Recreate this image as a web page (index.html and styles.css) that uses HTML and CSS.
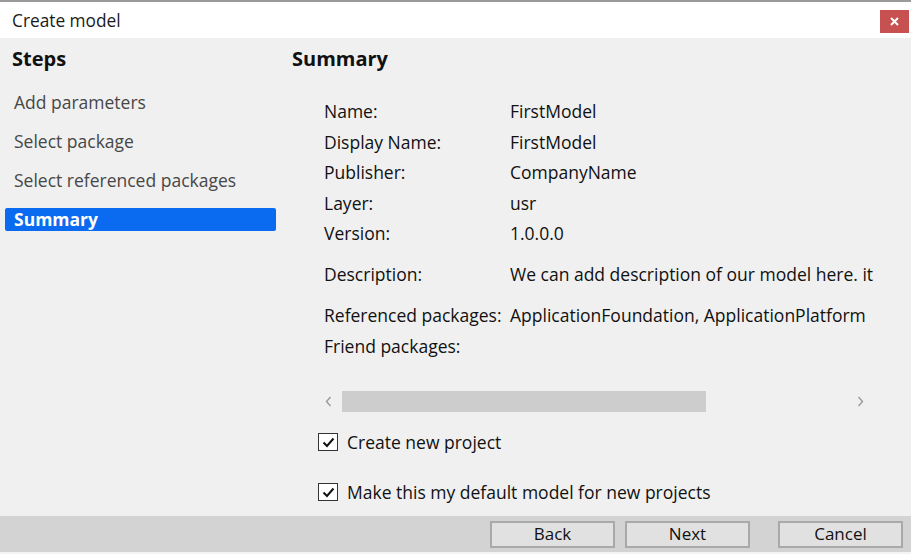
FILE: index.html
```html
<!DOCTYPE html>
<html>
<head>
<meta charset="utf-8">
<link rel="stylesheet" href="styles.css">
</head>
<body>
<div class="window">
  <div class="titlebar">
    <span class="title">Create model</span>
    <button class="close" aria-label="Close">
      <svg width="9" height="9" viewBox="0 0 9 9"><path d="M1 1 L8 8 M8 1 L1 8" stroke="#fff" stroke-width="2"/></svg>
    </button>
  </div>
  <div class="main">
    <div class="sidebar">
      <div class="heading">Steps</div>
      <ul class="steps">
        <li>Add parameters</li>
        <li>Select package</li>
        <li>Select referenced packages</li>
        <li class="active">Summary</li>
      </ul>
    </div>
    <div class="content">
      <div class="heading">Summary</div>
      <div class="summary">
        <div class="row"><span class="label">Name:</span><span class="value">FirstModel</span></div>
        <div class="row"><span class="label">Display Name:</span><span class="value">FirstModel</span></div>
        <div class="row"><span class="label">Publisher:</span><span class="value">CompanyName</span></div>
        <div class="row"><span class="label">Layer:</span><span class="value">usr</span></div>
        <div class="row"><span class="label">Version:</span><span class="value">1.0.0.0</span></div>
        <div class="row desc"><span class="label">Description:</span><span class="value">We can add description of our model here. it</span></div>
        <div class="row refs"><span class="label">Referenced packages:</span><span class="value">ApplicationFoundation, ApplicationPlatform</span></div>
        <div class="row"><span class="label">Friend packages:</span><span class="value"></span></div>
      </div>
      <div class="hscroll">
        <svg class="arrow" width="7" height="11" viewBox="0 0 7 11"><path d="M5.5 1 L1.5 5.5 L5.5 10" fill="none" stroke="#9a9a9a" stroke-width="1.4"/></svg>
        <div class="track"><div class="thumb"></div></div>
        <svg class="arrow" width="7" height="11" viewBox="0 0 7 11"><path d="M1.5 1 L5.5 5.5 L1.5 10" fill="none" stroke="#9a9a9a" stroke-width="1.4"/></svg>
      </div>
      <label class="check first"><span class="box"><svg width="13" height="11" viewBox="0 0 13 11"><path d="M1.5 5.5 L5 9 L11.5 1.5" fill="none" stroke="#111" stroke-width="2"/></svg></span>Create new project</label>
      <label class="check second"><span class="box"><svg width="13" height="11" viewBox="0 0 13 11"><path d="M1.5 5.5 L5 9 L11.5 1.5" fill="none" stroke="#111" stroke-width="2"/></svg></span>Make this my default model for new projects</label>
    </div>
  </div>
  <div class="footer">
    <button class="btn">Back</button>
    <button class="btn">Next</button>
    <button class="btn cancel">Cancel</button>
  </div>
  <div class="bottomline"></div>
</div>
</body>
</html>
```

FILE: styles.css
```css
html, body {
  margin: 0;
  padding: 0;
  background: #ffffff;
}
body {
  font-family: "Open Sans", "Noto Sans", sans-serif;
  font-size: 17.5px;
  font-weight: 500;
  color: #111111;
}
.window {
  width: 911px;
  height: 554px;
  display: flex;
  flex-direction: column;
  overflow: hidden;
}
.titlebar {
  height: 36px;
  border-top: 2px solid #9a9a9a;
  background: #ffffff;
  display: flex;
  align-items: center;
  justify-content: space-between;
  padding: 0 2px 0 12px;
}
.title {
  font-size: 17.3px;
  color: #1a1a1a;
}
.close {
  width: 29px;
  height: 23px;
  margin-top: 8px;
  align-self: flex-start;
  background: #c75050;
  border: none;
  padding: 0;
  display: flex;
  align-items: center;
  justify-content: center;
}
.main {
  flex: 1;
  display: flex;
  background: #f0f0f0;
}
.sidebar {
  width: 280px;
  padding-left: 5px;
}
.heading {
  font-weight: 700;
  font-size: 20px;
  color: #111;
  height: 22px;
  line-height: 22px;
  margin-top: 10px;
}
.sidebar .heading {
  padding-left: 7px;
}
.steps {
  list-style: none;
  margin: 21px 0 0;
  padding: 0;
  display: flex;
  flex-direction: column;
  gap: 16px;
}
.steps li {
  height: 23px;
  line-height: 23px;
  padding-left: 9px;
  color: #474747;
  border-radius: 2px;
}
.steps li.active {
  background: #0a6af0;
  color: #ffffff;
  font-weight: 700;
  margin-right: 9px;
}
.content {
  flex: 1;
  padding-left: 7px;
}
.summary {
  margin-top: 29px;
  padding-left: 32px;
  display: flex;
  flex-direction: column;
}
.row {
  display: flex;
  height: 30.5px;
  line-height: 24px;
}
.row.desc {
  margin-top: 10px;
  height: 41px;
}
.row.refs {
  height: 31px;
}
.label {
  width: 186px;
  flex: none;
}
.value {
  white-space: nowrap;
}
.hscroll {
  margin: 27px 0 0 26px;
  width: 555px;
  height: 21px;
  display: flex;
  align-items: center;
  gap: 10px;
  padding: 0 9px 0 7px;
  box-sizing: border-box;
}
.arrow {
  flex: none;
}
.track {
  flex: 1;
  height: 21px;
}
.thumb {
  width: 364px;
  height: 21px;
  background: #cdcdcd;
}
.check {
  display: flex;
  align-items: center;
  gap: 9px;
  margin-left: 26px;
  height: 20px;
}
.check.first {
  margin-top: 20px;
}
.check.second {
  margin-top: 30px;
}
.box {
  width: 18px;
  height: 16px;
  border: 1px solid #333;
  background: #fff;
  display: flex;
  align-items: center;
  justify-content: center;
}
.footer {
  height: 36px;
  background: #d3d3d3;
  display: flex;
  align-items: center;
  justify-content: flex-end;
  gap: 10px;
  padding-right: 8px;
}
.btn {
  width: 125px;
  height: 27px;
  background: #e1e1e1;
  border: 2px solid #a9a9a9;
  font-family: "Open Sans", "Noto Sans", sans-serif;
  font-size: 17px;
  font-weight: 500;
  color: #111111;
  padding: 0;
  line-height: 20px;
}
.btn.cancel {
  margin-left: 18px;
}
.bottomline {
  height: 2px;
  background: #f4f4f4;
}
```
